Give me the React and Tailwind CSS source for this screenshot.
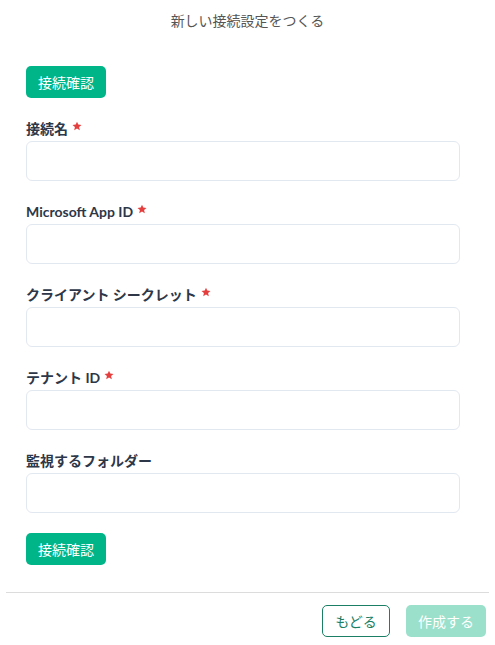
import React from 'react';

const fields = [
  { label: '接続名', required: true },
  { label: 'Microsoft App ID', required: true },
  { label: 'クライアント シークレット', required: true },
  { label: 'テナント ID', required: true },
  { label: '監視するフォルダー', required: false },
];

function CheckButton() {
  return (
    <button
      type="button"
      className="h-8 w-20 rounded-[5px] bg-[#00b588] text-[14px] text-white"
    >
      接続確認
    </button>
  );
}

function Star() {
  return (
    <svg viewBox="0 0 24 24" className="w-[10px] h-[10px] mb-[4px]" fill="#e53e3e">
      <path d="M12 1.5l3.1 7.1 7.7.7-5.8 5.1 1.7 7.6L12 18l-6.7 4 1.7-7.6-5.8-5.1 7.7-.7z" />
    </svg>
  );
}

export default function App() {
  return (
    <div
      className="w-[495px] h-[645px] bg-white"
      style={{ fontFamily: 'Lato, "Noto Sans CJK JP", sans-serif' }}
    >
      <div className="h-10 flex items-center justify-center text-[14px] text-[#555]">
        新しい接続設定をつくる
      </div>

      <div className="pl-[26px] pr-[35px] pt-[26px]">
        <CheckButton />

        <div className="mt-5 flex flex-col gap-5">
          {fields.map((f) => (
            <div key={f.label}>
              <label className="h-5 flex items-center gap-[4px] text-[14px] font-bold text-[#2d3748]">
                {f.label}
                {f.required && <Star />}
              </label>
              <input
                type="text"
                className="mt-[3px] block w-full h-10 rounded-[6px] border border-[#e2e8f0] px-3 outline-none"
              />
            </div>
          ))}
        </div>

        <div className="mt-5">
          <CheckButton />
        </div>
      </div>

      <div className="mx-[6px] mt-[27px] border-t border-[#dcdcdc] pt-[12px] pr-[3px] flex justify-end gap-4">
        <button
          type="button"
          className="h-8 w-[68px] rounded-[5px] border border-[#1a7f64] text-[14px] text-[#1a7f64] bg-white"
        >
          もどる
        </button>
        <button
          type="button"
          className="h-8 w-20 rounded-[5px] bg-[#9ae0cb] text-[14px] text-white"
        >
          作成する
        </button>
      </div>
    </div>
  );
}
